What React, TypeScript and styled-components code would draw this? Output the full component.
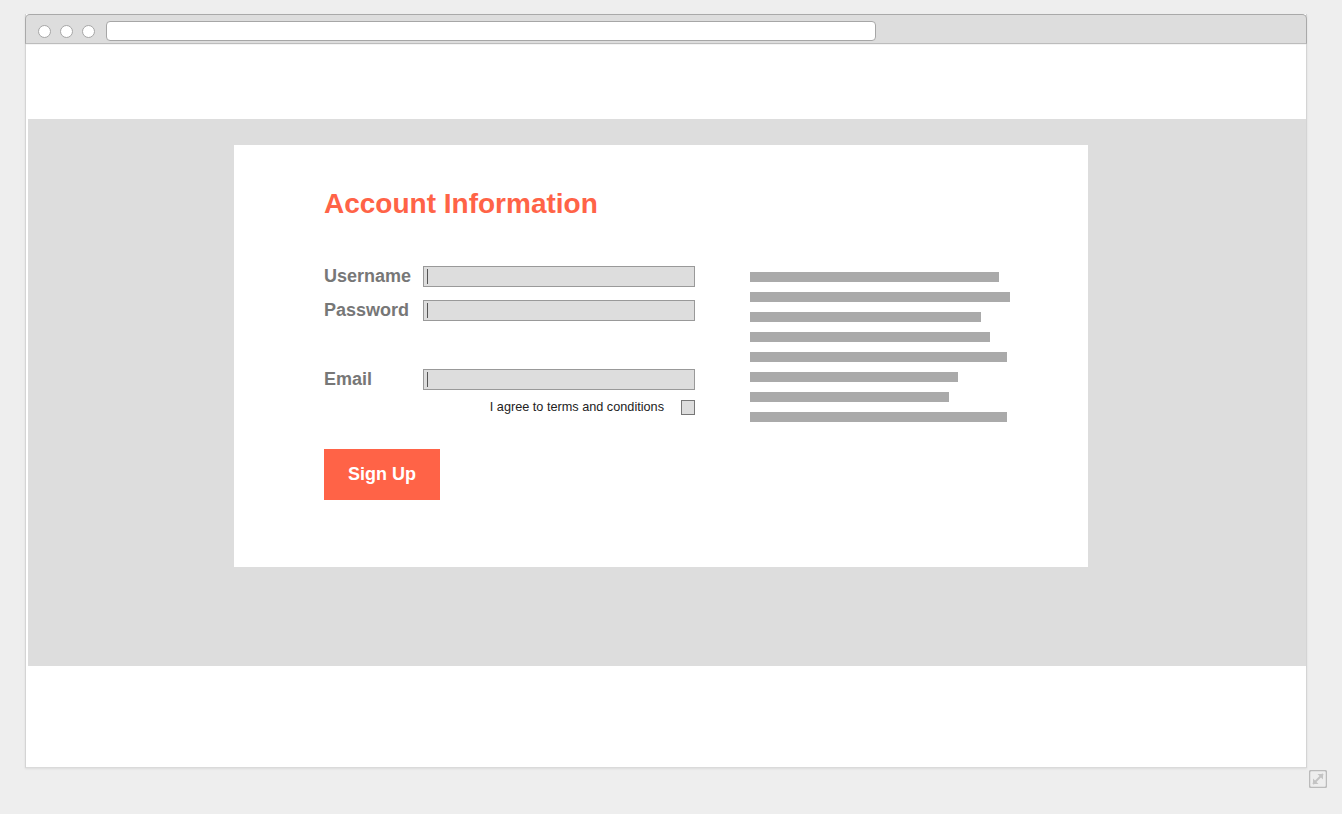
import React from "react";
import styled, { createGlobalStyle } from "styled-components";

const GlobalStyle = createGlobalStyle`
  html, body {
    margin: 0;
    padding: 0;
    background: #eeeeee;
    font-family: "Liberation Sans", Arial, sans-serif;
  }
  * { box-sizing: border-box; }
`;

const Page = styled.div`
  width: 1342px;
  height: 814px;
  padding: 14px 0 0 25px;
  display: flex;
  flex-direction: column;
`;

const Outer = styled.div`
  width: 1302px;
  display: flex;
  flex-direction: column;
`;

const Window = styled.div`
  width: 1282px;
  height: 754px;
  display: flex;
  flex-direction: column;
  background: #ffffff;
  border-left: 1px solid #d4d4d4;
  border-right: 1px solid #d4d4d4;
  border-bottom: 1px solid #dadada;
  box-shadow: 0 1px 2px rgba(0, 0, 0, 0.08);
`;

const TitleBar = styled.div`
  height: 30px;
  flex: none;
  display: flex;
  align-items: center;
  gap: 9px;
  padding: 4px 0 0 12px;
  margin: 0 -1px;
  background: #dddddd;
  border: 1px solid #a9a9a9;
  border-bottom: 1px solid #bcbcbc;
  border-radius: 5px 5px 0 0;
`;

const Dot = styled.span`
  width: 13px;
  height: 13px;
  border-radius: 50%;
  background: #ffffff;
  border: 1px solid #a6a6a6;
  flex: none;
`;

const UrlBar = styled.div`
  width: 770px;
  height: 20px;
  margin-left: 2px;
  background: #ffffff;
  border: 1px solid #a6a6a6;
  border-radius: 4px;
`;

const Content = styled.div`
  flex: 1;
  display: flex;
  flex-direction: column;
  padding: 74px 0 0 2px;
  border-top: 1px solid #f4f4f4;
`;

const Band = styled.div`
  height: 547px;
  background: #dddddd;
  padding: 26px 0 0 206px;
`;

const Card = styled.div`
  width: 854px;
  height: 422px;
  background: #ffffff;
  padding: 43px 0 0 90px;
  display: flex;
  flex-direction: column;
`;

const Title = styled.h1`
  margin: 0;
  font-size: 28px;
  line-height: 32px;
  font-weight: bold;
  color: #ff6347;
`;

const Body = styled.div`
  display: flex;
  margin-top: 46px;
`;

const Form = styled.div`
  width: 371px;
  display: flex;
  flex-direction: column;
`;

const Row = styled.div<{ $gap: number }>`
  display: flex;
  align-items: center;
  height: 21px;
  margin-top: ${(p) => p.$gap}px;
`;

const Label = styled.span`
  width: 99px;
  font-size: 18px;
  line-height: 21px;
  font-weight: bold;
  color: #777777;
`;

const Field = styled.div`
  width: 272px;
  height: 21px;
  background: #dddddd;
  border: 1px solid #999999;
  display: flex;
  align-items: center;
  padding-left: 3px;
`;

const Caret = styled.span`
  width: 1px;
  height: 15px;
  background: #555555;
`;

const AgreeRow = styled.div`
  display: flex;
  justify-content: flex-end;
  align-items: center;
  gap: 17px;
  margin-top: 10px;
  height: 15px;
`;

const AgreeText = styled.span`
  font-size: 12.7px;
  line-height: 15px;
  color: #222222;
`;

const Check = styled.span`
  width: 14px;
  height: 15px;
  background: #dddddd;
  border: 1px solid #777777;
`;

const Bars = styled.div`
  margin: 6px 0 0 55px;
  display: flex;
  flex-direction: column;
  gap: 10px;
`;

const Bar = styled.div`
  height: 10px;
  background: #aaaaaa;
`;

const Button = styled.button`
  margin-top: 27px;
  width: 116px;
  height: 51px;
  border: none;
  background: #ff6347;
  color: #ffffff;
  font-family: "Liberation Sans", Arial, sans-serif;
  font-size: 18px;
  font-weight: bold;
  padding: 0;
  cursor: pointer;
`;

const ResizeRow = styled.div`
  display: flex;
  justify-content: flex-end;
  margin-top: 2px;
`;

const barWidths = [249, 260, 231, 240, 257, 208, 199, 257];

const fields = [
  { label: "Username", gap: 0 },
  { label: "Password", gap: 13 },
  { label: "Email", gap: 48 },
];

export default function App() {
  return (
    <>
      <GlobalStyle />
      <Page>
        <Outer>
          <Window>
            <TitleBar>
              <Dot />
              <Dot />
              <Dot />
              <UrlBar />
            </TitleBar>
            <Content>
              <Band>
                <Card>
                  <Title>Account Information</Title>
                  <Body>
                    <Form>
                      {fields.map((f) => (
                        <Row key={f.label} $gap={f.gap}>
                          <Label>{f.label}</Label>
                          <Field>
                            <Caret />
                          </Field>
                        </Row>
                      ))}
                      <AgreeRow>
                        <AgreeText>I agree to terms and conditions</AgreeText>
                        <Check />
                      </AgreeRow>
                    </Form>
                    <Bars>
                      {barWidths.map((w, i) => (
                        <Bar key={i} style={{ width: w }} />
                      ))}
                    </Bars>
                  </Body>
                  <Button>Sign Up</Button>
                </Card>
              </Band>
            </Content>
          </Window>
          <ResizeRow>
            <svg width="18" height="18" viewBox="0 0 18 18">
              <rect x="0.5" y="0.5" width="17" height="17" rx="2" fill="none" stroke="#bbbbbb" strokeWidth="1.5" />
              <path d="M4 14 L14 4" stroke="#c4c4c4" strokeWidth="2" />
              <path d="M8.5 4 H14 V9.5 Z" fill="#c4c4c4" />
              <path d="M4 8.5 V14 H9.5 Z" fill="#c4c4c4" />
            </svg>
          </ResizeRow>
        </Outer>
      </Page>
    </>
  );
}
